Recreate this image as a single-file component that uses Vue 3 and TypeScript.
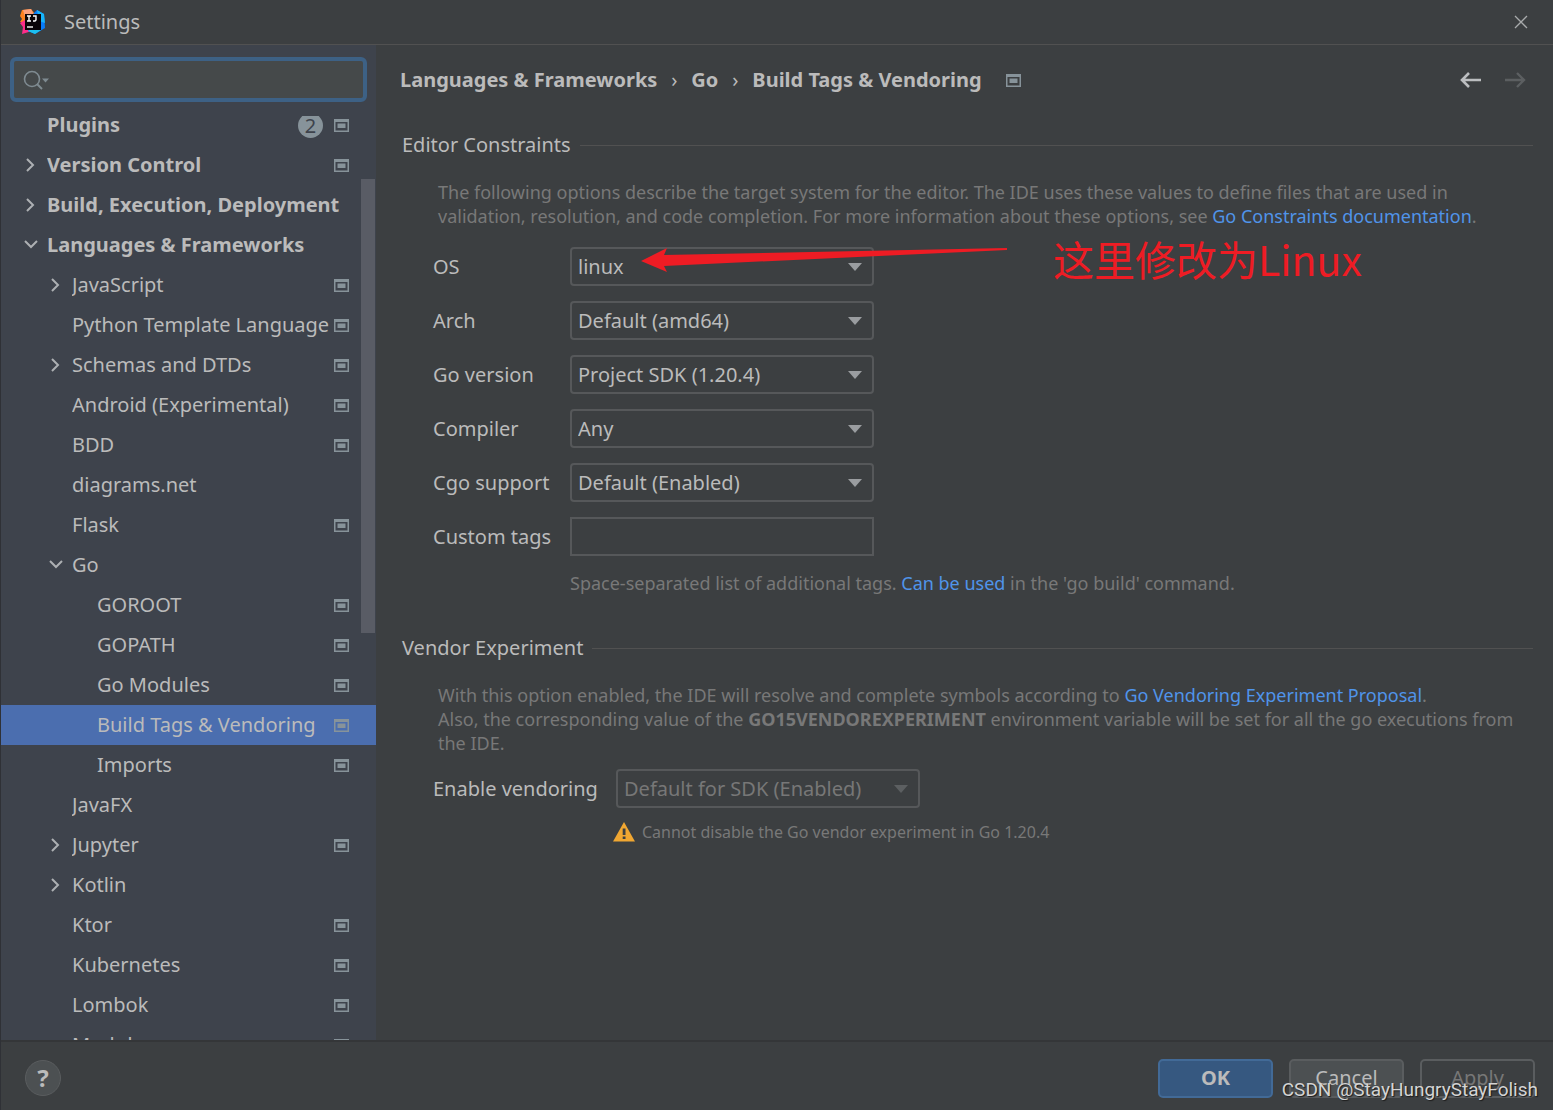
<script setup lang="ts">
import { ref } from 'vue'

interface TreeItem {
  label: string
  level: number
  state?: 'open' | 'closed'
  project?: boolean
  badge?: string
  selected?: boolean
}

interface Field {
  id: string
  label: string
  value: string
}

const query = ref('')
const customTags = ref('')

const items: TreeItem[] = [
  { label: 'Plugins', level: 0, badge: '2', project: true },
  { label: 'Version Control', level: 0, state: 'closed', project: true },
  { label: 'Build, Execution, Deployment', level: 0, state: 'closed' },
  { label: 'Languages & Frameworks', level: 0, state: 'open' },
  { label: 'JavaScript', level: 1, state: 'closed', project: true },
  { label: 'Python Template Languages', level: 1, project: true },
  { label: 'Schemas and DTDs', level: 1, state: 'closed', project: true },
  { label: 'Android (Experimental)', level: 1, project: true },
  { label: 'BDD', level: 1, project: true },
  { label: 'diagrams.net', level: 1 },
  { label: 'Flask', level: 1, project: true },
  { label: 'Go', level: 1, state: 'open' },
  { label: 'GOROOT', level: 2, project: true },
  { label: 'GOPATH', level: 2, project: true },
  { label: 'Go Modules', level: 2, project: true },
  { label: 'Build Tags & Vendoring', level: 2, project: true, selected: true },
  { label: 'Imports', level: 2, project: true },
  { label: 'JavaFX', level: 1 },
  { label: 'Jupyter', level: 1, state: 'closed', project: true },
  { label: 'Kotlin', level: 1, state: 'closed' },
  { label: 'Ktor', level: 1, project: true },
  { label: 'Kubernetes', level: 1, project: true },
  { label: 'Lombok', level: 1, project: true },
  { label: 'Markdown', level: 1, project: true },
]

const fields: Field[] = [
  { id: 'os', label: 'OS', value: 'linux' },
  { id: 'arch', label: 'Arch', value: 'Default (amd64)' },
  { id: 'version', label: 'Go version', value: 'Project SDK (1.20.4)' },
  { id: 'compiler', label: 'Compiler', value: 'Any' },
  { id: 'cgo', label: 'Cgo support', value: 'Default (Enabled)' },
]
</script>

<template>
  <div class="window">
    <header class="titlebar">
      <svg class="logo" viewBox="0 0 26 26" aria-hidden="true">
        <path d="M2 1 L11 0 L15 5 L9 14 L0 13 L2 10 L0 7 Z" fill="#fc801d" />
        <path d="M3 1 L11 0 L14 6 L5 8 Z" fill="#f9a07c" />
        <path d="M0 14 L8 9 L12 22 L2 25 L3 18 Z" fill="#fe2d8a" />
        <path d="M13 5 L17 1 L24 5 L25 19 L15 25 L8 22 Z" fill="#087cfa" />
        <path d="M17 1 L24 5 L25 14 L19 12 Z" fill="#17b5fb" />
        <path d="M8 22 L15 25 L21 21 L14 18 Z" fill="#1cc0ef" />
        <rect x="5" y="5" width="16" height="16" fill="#0a0508" />
        <path d="M7 7h4M9 7v5M7 12h4M13 7h3v4l-1 1h-2" fill="none" stroke="#fff" stroke-width="1.4" />
        <path d="M7 18h6" stroke="#ddd" stroke-width="1.6" />
      </svg>
      <h1 class="title">Settings</h1>
      <button class="icon-btn" type="button" aria-label="Close">
        <svg width="14" height="14" viewBox="0 0 14 14"><path d="M1 1l12 12M13 1L1 13" stroke="#a9abac" stroke-width="1.3" /></svg>
      </button>
    </header>

    <div class="body">
      <aside class="sidebar">
        <div class="search">
          <svg width="27" height="22" viewBox="0 0 27 22" aria-hidden="true">
            <circle cx="9" cy="10" r="7.5" fill="none" stroke="#7f8b91" stroke-width="1.6" />
            <path d="M14 15l5 5" stroke="#7f8b91" stroke-width="2" />
            <path d="M19 9.500h7l-3.500 4z" fill="#7f8b91" />
          </svg>
          <input v-model="query" type="text" aria-label="Search settings" />
        </div>
        <nav class="tree" aria-label="Settings">
          <ul>
            <li
              v-for="item in items"
              :key="item.label"
              :class="['row', 'level-' + item.level, { selected: item.selected }]"
            >
              <span class="chevron">
                <svg v-if="item.state === 'closed'" width="14" height="16" viewBox="0 0 14 16"><path d="M4 2l6 6-6 6" /></svg>
                <svg v-if="item.state === 'open'" width="16" height="16" viewBox="0 0 16 16"><path d="M2 4l6 6 6-6" /></svg>
              </span>
              <span class="label">{{ item.label }}</span>
              <span v-if="item.badge" class="badge">{{ item.badge }}</span>
              <svg v-if="item.project" class="project" width="15" height="13" viewBox="0 0 15 13">
                <path d="M0 0h15v13H0zM1.500 3v8.500h12V3z" fill-rule="evenodd" />
                <path d="M3.500 4.500h8v4.500h-8z" />
              </svg>
            </li>
          </ul>
          <span class="thumb"></span>
        </nav>
      </aside>

      <main class="content">
        <div class="crumbs">
          <span>Languages &amp; Frameworks</span>
          <span class="sep">›</span>
          <span>Go</span>
          <span class="sep">›</span>
          <span>Build Tags &amp; Vendoring</span>
          <svg class="project" width="15" height="13" viewBox="0 0 15 13">
            <path d="M0 0h15v13H0zM1.500 3v8.500h12V3z" fill-rule="evenodd" />
            <path d="M3.500 4.500h8v4.500h-8z" />
          </svg>
          <div class="history">
            <button class="icon-btn" type="button" aria-label="Back">
              <svg width="22" height="16" viewBox="0 0 22 16"><path d="M21 8H3M9 1L2 8l7 7" fill="none" stroke="#bcbec0" stroke-width="2.600" /></svg>
            </button>
            <button class="icon-btn" type="button" aria-label="Forward" disabled>
              <svg width="22" height="16" viewBox="0 0 22 16"><path d="M1 8h18M13 1l7 7-7 7" fill="none" stroke="#5c5f61" stroke-width="2.400" /></svg>
            </button>
          </div>
        </div>

        <section>
          <h2>Editor Constraints</h2>
          <p class="desc">
            The following options describe the target system for the editor. The IDE uses these values to define files that are used in<br />
            validation, resolution, and code completion. For more information about these options, see <a href="#constraints">Go Constraints documentation</a>.
          </p>
          <div class="form">
            <div v-for="field in fields" :key="field.id" class="field">
              <label :for="field.id">{{ field.label }}</label>
              <div class="combo">
                <select :id="field.id"><option>{{ field.value }}</option></select>
                <svg width="14" height="8" viewBox="0 0 14 8"><path d="M0 0h14L7 8z" fill="#9a9da0" /></svg>
              </div>
            </div>
            <div class="field">
              <label for="tags">Custom tags</label>
              <input id="tags" v-model="customTags" type="text" />
            </div>
            <div class="note">
              <svg class="pointer" width="368" height="26" viewBox="0 0 368 26" aria-hidden="true">
                <path d="M0 13L26 0l-3 7L366 0v2L23 18l3 6z" fill="#ee1c24" />
              </svg>
              <span>这里修改为Linux</span>
            </div>
          </div>
          <p class="hint">Space-separated list of additional tags. <a href="#tags-help">Can be used</a> in the 'go build' command.</p>
        </section>

        <section>
          <h2>Vendor Experiment</h2>
          <p class="desc">
            With this option enabled, the IDE will resolve and complete symbols according to <a href="#vendoring">Go Vendoring Experiment Proposal</a>.<br />
            Also, the corresponding value of the <b>GO15VENDOREXPERIMENT</b> environment variable will be set for all the go executions from<br />
            the IDE.
          </p>
          <div class="form vendor">
            <div class="field">
              <label for="vendoring">Enable vendoring</label>
              <div class="combo">
                <select id="vendoring" disabled><option>Default for SDK (Enabled)</option></select>
                <svg width="14" height="8" viewBox="0 0 14 8"><path d="M0 0h14L7 8z" fill="#5c5f61" /></svg>
              </div>
            </div>
          </div>
          <p class="warning">
            <svg width="22" height="20" viewBox="0 0 22 20" aria-hidden="true">
              <path d="M11 0l11 19.500H0z" fill="#f0a732" />
              <path d="M9.700 6.500h2.800v6.500H9.700zM9.700 14.500h2.800v2.500H9.700z" fill="#3c3f41" />
            </svg>
            <span>Cannot disable the Go vendor experiment in Go 1.20.4</span>
          </p>
        </section>
      </main>
    </div>

    <footer class="footer">
      <button class="help" type="button" aria-label="Help">?</button>
      <div class="actions">
        <button class="btn primary" type="button">OK</button>
        <button class="btn" type="button">Cancel</button>
        <button class="btn" type="button" disabled>Apply</button>
      </div>
      <span class="watermark">CSDN @StayHungryStayFolish</span>
    </footer>
  </div>
</template>

<style>
body {
  background: #3c3f41;
}
</style>

<style scoped>
* {
  box-sizing: border-box;
}

.window {
  display: flex;
  flex-direction: column;
  height: 100vh;
  overflow: hidden;
  border-left: 1px solid #2f3136;
  background: #3c3f41;
  color: #bbbbbb;
  font: 20px/30px "Noto Sans", "Noto Sans CJK SC", sans-serif;
}

button,
input,
select {
  font: inherit;
  color: inherit;
}

h1,
h2,
p,
ul {
  margin: 0;
  padding: 0;
  font: inherit;
}

a {
  color: #5094ea;
  text-decoration: none;
}

.icon-btn {
  display: grid;
  place-items: center;
  padding: 0;
  border: 0;
  background: none;
}

.titlebar {
  display: flex;
  flex: none;
  align-items: center;
  height: 45px;
  padding: 0 25px 0 19px;
  border-bottom: 1px solid #515151;
}

.logo {
  width: 26px;
  height: 26px;
}

.title {
  flex: 1;
  margin-left: 18px;
}

.body {
  display: flex;
  flex: 1;
  min-height: 0;
}

.sidebar {
  display: flex;
  flex: none;
  flex-direction: column;
  width: 375px;
  padding-top: 12px;
  background: #3e434c;
}

.search {
  display: flex;
  flex: none;
  align-items: center;
  height: 45px;
  margin: 0 9px 14px;
  padding: 0 9px;
  border: 4px solid #3d6185;
  border-radius: 6px;
  background: #45494a;
}

.search input {
  flex: 1;
  min-width: 0;
  border: 0;
  outline: 0;
  background: none;
}

.tree {
  position: relative;
  flex: 1;
  overflow: hidden;
}

.tree ul {
  margin-top: -11px;
  list-style: none;
}

.row {
  display: flex;
  align-items: center;
  height: 40px;
  padding-right: 27px;
}

.level-0 {
  padding-left: 19px;
  font-weight: 700;
}

.level-1 {
  padding-left: 44px;
}

.level-2 {
  padding-left: 69px;
}

.selected {
  background: #4b6eaf;
}

.chevron {
  display: flex;
  flex: none;
  width: 27px;
  padding-left: 3px;
}

.chevron svg {
  fill: none;
  stroke: #adb0b3;
  stroke-width: 2;
}

.label {
  flex: 1;
  overflow: hidden;
  white-space: nowrap;
}

.badge {
  width: 25px;
  height: 25px;
  margin-right: 11px;
  border-radius: 50%;
  background: #87939a;
  color: #3e434c;
  font-weight: 400;
  line-height: 25px;
  text-align: center;
}

.project {
  flex: none;
  margin-left: 5px;
  fill: #87939a;
}

.badge + .project {
  margin-left: 0;
}

.thumb {
  position: absolute;
  top: 63px;
  right: 1px;
  width: 14px;
  height: 454px;
  background: #595c65;
}

.content {
  flex: 1;
  min-width: 0;
  padding: 15px 20px 0 24px;
}

.crumbs {
  display: flex;
  align-items: center;
  height: 40px;
  margin-bottom: 30px;
  font-weight: 700;
}

.sep {
  width: 34px;
  font-weight: 400;
  text-align: center;
}

.crumbs .project {
  margin-left: 24px;
}

.history {
  display: flex;
  gap: 22px;
  margin-left: auto;
  padding-right: 7px;
}

h2 {
  display: flex;
  align-items: center;
  gap: 9px;
  padding-left: 2px;
}

h2::after {
  flex: 1;
  height: 1px;
  background: #515151;
  content: "";
}

.desc,
.hint {
  color: #787878;
  font-size: 18px;
  line-height: 24px;
}

.desc {
  margin-top: 20px;
  padding-left: 38px;
  white-space: nowrap;
}

.form {
  position: relative;
  display: grid;
  gap: 15px;
  margin: 19px 0 15px;
  padding-left: 33px;
}

.field {
  display: grid;
  grid-template-columns: 137px 304px;
  align-items: center;
  height: 39px;
}

.vendor {
  margin: 14px 0 12px;
}

.vendor .field {
  grid-template-columns: 183px 304px;
}

.combo {
  display: grid;
  align-items: center;
}

.combo select,
.combo svg {
  grid-area: 1 / 1;
}

.combo svg {
  justify-self: end;
  margin-right: 12px;
  pointer-events: none;
}

.combo select,
.field input {
  width: 100%;
  height: 39px;
  padding: 0 6px;
  border: 2px solid #56585a;
  border-radius: 4px;
  outline: 0;
  appearance: none;
  background: #3c3f41;
}

.field input {
  border-radius: 0;
}

.combo select:disabled {
  color: #777777;
  opacity: 1;
}

.note {
  position: absolute;
  top: 1px;
  left: 241px;
  display: flex;
  align-items: flex-start;
  gap: 44px;
  color: #ee1c24;
  font: 41px/20px "Noto Sans CJK SC", sans-serif;
  white-space: nowrap;
}

.hint {
  margin-bottom: 38px;
  padding-left: 170px;
}

.warning {
  display: flex;
  align-items: center;
  gap: 7px;
  padding-left: 213px;
  color: #787878;
  font-size: 16px;
  line-height: 24px;
}

.footer {
  position: relative;
  display: flex;
  flex: none;
  align-items: center;
  justify-content: space-between;
  height: 70px;
  padding: 4px 18px 0 24px;
  border-top: 2px solid #343638;
}

.help {
  width: 36px;
  height: 36px;
  padding: 0;
  border: 1px solid #5a5d5f;
  border-radius: 50%;
  background: #4c5052;
  font-size: 24px;
  font-weight: 700;
  line-height: 34px;
}

.actions {
  display: flex;
  gap: 16px;
}

.btn {
  width: 115px;
  height: 39px;
  padding: 0;
  border: 2px solid #5a5d5f;
  border-radius: 5px;
  background: #4c5052;
}

.btn.primary {
  border-color: #426a97;
  background: #365880;
  font-weight: 700;
}

.btn:disabled {
  background: #3c3f41;
  color: #777777;
}

.watermark {
  position: absolute;
  right: 15px;
  bottom: 5px;
  color: #d4d4d4;
  font: 19px/30px Roboto, sans-serif;
  text-shadow: 1px 1px 1px #1c1c1c;
}
</style>
